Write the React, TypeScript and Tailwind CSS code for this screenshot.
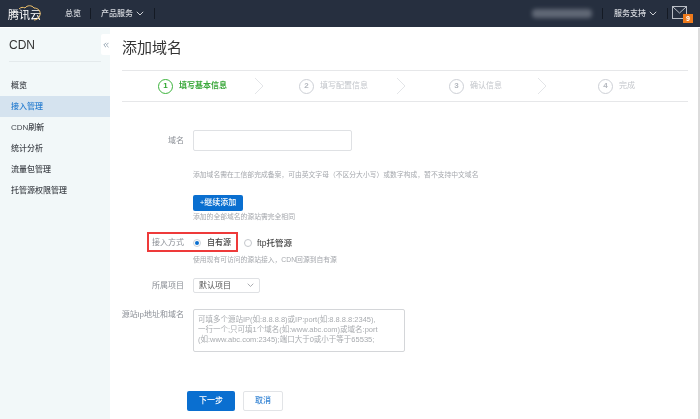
import React from "react";

const font = { fontFamily: '"Liberation Sans","Noto Sans CJK SC",sans-serif' };

function Chevron({ className = "" }: { className?: string }) {
  return (
    <svg width="10" height="18" viewBox="0 0 10 18" fill="none" className={className}>
      <path d="M1 1l8 8-8 8" stroke="#e3e5e8" strokeWidth="1" />
    </svg>
  );
}

function Down({ color, size = 8 }: { color: string; size?: number }) {
  return (
    <svg width={size} height={size * 0.6} viewBox="0 0 10 6" fill="none">
      <path d="M1 1l4 4 4-4" stroke={color} strokeWidth="1.2" />
    </svg>
  );
}

function Step({ n, label, w, active, chevron }: { n: number; label: string; w: string; active?: boolean; chevron?: string }) {
  return (
    <div className={`flex items-center shrink-0 ${w}`}>
      <div
        className={
          active
            ? "w-[15px] h-[15px] rounded-full border-[1.5px] border-[#3cb43c] text-[#2aa52a] flex items-center justify-center text-[8px] font-bold"
            : "w-[15px] h-[15px] rounded-full border border-[#cdd0d6] text-[#b4b8bf] flex items-center justify-center text-[8px] font-bold"
        }
      >
        {n}
      </div>
      <span className={active ? "ml-[6px] text-[8px] font-bold text-[#3aa83a]" : "ml-[6px] text-[8px] text-[#c3c6cb]"}>{label}</span>
      {chevron && <Chevron className={chevron} />}
    </div>
  );
}

function Row({ label, children, className = "" }: { label: string; children: React.ReactNode; className?: string }) {
  return (
    <div className={`flex ${className}`}>
      <div className="w-[62px] shrink-0 text-right text-[8px] text-[#8b8f96] whitespace-nowrap flex justify-end">{label}</div>
      <div className="ml-[9px] min-w-0">{children}</div>
    </div>
  );
}

const help = "ml-[71px] text-[6.8px] leading-[10px] text-[#a5a8ad] whitespace-nowrap";

export default function App() {
  const nav = ["概览", "接入管理", "CDN刷新", "统计分析", "流量包管理", "托管源权限管理"];
  return (
    <div style={font} className="w-[700px] h-[419px] overflow-hidden bg-white flex flex-col blur-[0.3px]">
      <header className="h-[27px] shrink-0 bg-[#262f3f] flex items-center text-[#d5d8dd] text-[8px]">
        <div className="relative w-[65px] pl-[8px] h-full flex items-center">
          <span className="text-white text-[11px] mt-[4px]">腾讯云</span>
          <svg className="absolute left-[17px] top-[4px]" width="26" height="18" viewBox="0 0 26 18" fill="none">
            <path d="M2 5c2-2 4-2 6-1 2-3 7-3 9 0 4 0 7 3 6 7-1 3-3 5-6 5" stroke="#f2c36b" strokeWidth="1" />
          </svg>
        </div>
        <span className="font-medium">总览</span>
        <div className="w-px h-[11px] bg-[#141a24] ml-[9px]" />
        <span className="ml-[10px] font-medium">产品服务</span>
        <span className="ml-[3px]"><Down color="#d5d8dd" /></span>
        <div className="w-px h-[11px] bg-[#141a24] ml-[10px]" />
        <div className="ml-auto flex items-center h-full">
          <div className="w-[60px] h-[9px] bg-[#6f7683] blur-[2px] rounded-sm opacity-80" />
          <div className="w-px h-[11px] bg-[#141a24] ml-[10px]" />
          <span className="ml-[11px] font-medium">服务支持</span>
          <span className="ml-[3px]"><Down color="#d5d8dd" /></span>
          <div className="w-px h-[11px] bg-[#141a24] ml-[10px]" />
          <div className="relative ml-[4px] mr-[7px] w-[21px] h-[14px] mb-[1px]">
            <svg width="15" height="13" viewBox="0 0 15 13" fill="none">
              <rect x="0.5" y="0.5" width="14" height="12" stroke="#b9bdc5" />
              <path d="M1 1l6.500 6L14 1" stroke="#b9bdc5" />
            </svg>
            <span className="absolute right-0 bottom-[-3px] w-[10px] h-[9px] bg-[#ee7a1c] text-white text-[7px] font-bold leading-[9px] text-center">9</span>
          </div>
        </div>
      </header>

      <div className="flex-1 min-h-0 flex mt-px">
        <aside className="relative w-[110px] shrink-0 bg-[#f2f8f9]">
          <div className="mx-[9px] h-[34px] border-b border-[#e4eaec] flex items-center text-[12px] text-[#333]">CDN</div>
          <nav className="mt-[13px] text-[8px]">
            {nav.map((n, i) => (
              <div
                key={n}
                className={
                  i === 1
                    ? "h-[21px] px-[11px] flex items-center bg-[#d5e3ef] text-[#2b7fd0] font-medium"
                    : "h-[21px] px-[11px] flex items-center text-[#44484e] font-medium"
                }
              >
                {n}
              </div>
            ))}
          </nav>
          <div className="absolute right-0 top-[6px] w-[9px] h-[21px] bg-white flex items-center justify-center rounded-l-[2px]">
            <svg width="6" height="6" viewBox="0 0 6 6" fill="none">
              <path d="M3 .8L.8 3 3 5.200M5.500 .8L3.300 3l2.200 2.200" stroke="#9aa9b5" strokeWidth="1" />
            </svg>
          </div>
        </aside>

        <main className="flex-1 min-w-0 pl-[12px] pr-[10px] border-r-2 border-[#dcdcdc]">
          <h1 className="h-[40px] mb-[2px] flex items-center text-[15px] text-[#333] font-normal">添加域名</h1>
          <div className="h-[32px] border-y border-[#e6e7e9] flex items-center pl-[36px]">
            <Step n={1} label="填写基本信息" w="w-[141px]" active chevron="ml-auto mr-[35px]" />
            <Step n={2} label="填写配置信息" w="w-[150px]" chevron="ml-auto mr-[43px]" />
            <Step n={3} label="确认信息" w="w-[149px]" chevron="ml-auto mr-[51px]" />
            <Step n={4} label="完成" w="w-[80px]" />
          </div>

          <form className="relative mt-[28px]">
            <Row label="域名" className="items-center">
              <div className="w-[159px] h-[21px] border border-[#dfe1e4] rounded-[2px] bg-white" />
            </Row>
            <div className={`${help} mt-[19px]`}>
              添加域名需在工信部完成备案，可由英文字母（不区分大小写）或数字构成，暂不支持中文域名
            </div>
            <button type="button" className="block ml-[71px] mt-[15px] w-[50px] h-[16px] bg-[#0a6fd0] rounded-[2px] text-white text-[8px] font-medium">
              +继续添加
            </button>
            <div className={`${help} mt-[1px]`}>添加的全部域名的源站需完全相同</div>

            <Row label="接入方式" className="items-center mt-[11px] h-[20px]">
              <div className="flex items-center text-[8px] text-[#444] font-medium">
                <span className="w-[8px] h-[8px] rounded-full border border-[#cfd3d8] flex items-center justify-center">
                  <span className="w-[4px] h-[4px] rounded-full bg-[#0a6fd0]" />
                </span>
                <span className="ml-[6px]">自有源</span>
                <span className="ml-[13px] w-[8px] h-[8px] rounded-full border border-[#c4c7cc]" />
                <span className="ml-[5px] text-[8.500px]">ftp托管源</span>
              </div>
            </Row>
            <div className={`${help} mt-[2px]`}>使用现有可访问的源站接入，CDN回源到自有源</div>

            <Row label="所属项目" className="items-center mt-[13px]">
              <div className="w-[67px] h-[15px] border border-[#dfe1e4] rounded-[2px] flex items-center justify-between pl-[5px] pr-[5px] text-[8px] text-[#555]">
                默认项目
                <Down color="#9a9da2" size={7} />
              </div>
            </Row>

            <Row label="源站ip地址和域名" className="mt-[16px]">
              <div className="w-[212px] h-[43px] border border-[#d4d6d9] rounded-[2px] px-[4px] pt-[5px] text-[7.5px] leading-[10px] text-[#a8abaf] whitespace-nowrap">
                可填多个源站IP(如:8.8.8.8)或IP:port(如:8.8.8.8:2345),
                <br />
                一行一个;只可填1个域名(如:www.abc.com)或域名:port
                <br />
                (如:www.abc.com:2345);端口大于0或小于等于65535;
              </div>
            </Row>

            <div className="flex mt-[39px] ml-[65px] gap-[8px] text-[8px]">
              <button type="button" className="w-[48px] h-[20px] bg-[#0a6fd0] rounded-[2px] text-white font-medium">下一步</button>
              <button type="button" className="w-[40px] h-[20px] bg-white border border-[#e2e4e7] rounded-[2px] text-[#3a87d5] font-medium">取消</button>
            </div>

            <div className="absolute left-[25px] top-[102px] w-[91px] h-[20px] border-2 border-[#ee3a3a] pointer-events-none" />
          </form>
        </main>
      </div>
    </div>
  );
}
